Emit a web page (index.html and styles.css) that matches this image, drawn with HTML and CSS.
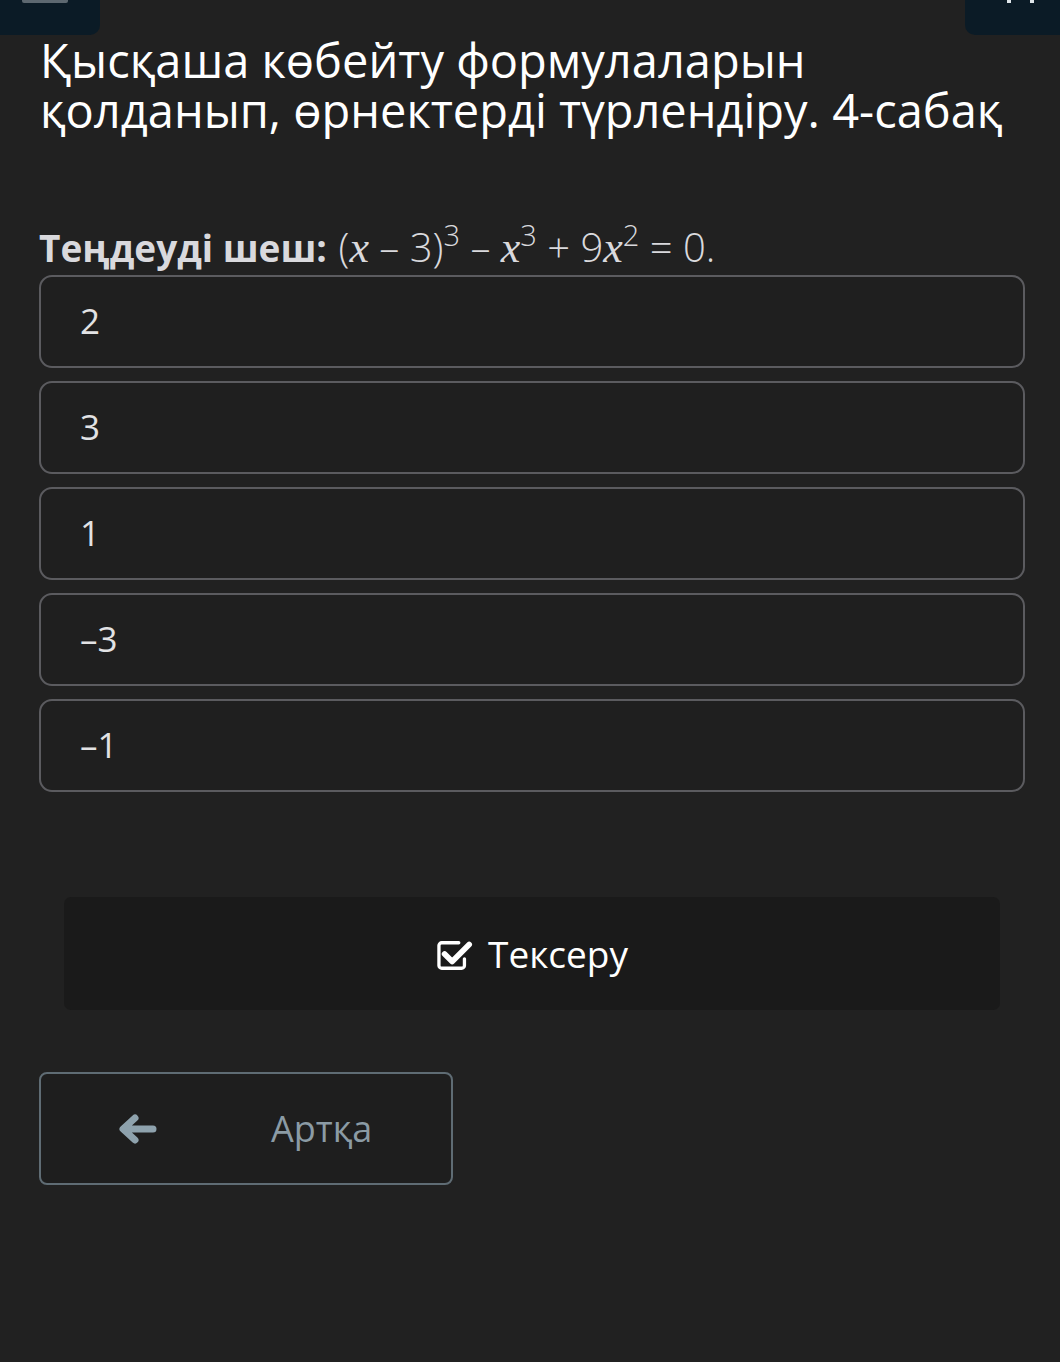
FILE: index.html
```html
<!DOCTYPE html>
<html lang="kk">
<head>
<meta charset="utf-8">
<link rel="stylesheet" href="styles.css">
</head>
<body>
<div class="page">
  <div class="topbar">
    <div class="tb-btn tb-left"><span class="burger"></span></div>
    <div class="tb-btn tb-right"><span class="dot"></span><span class="dot"></span></div>
  </div>
  <h1 class="title">Қысқаша көбейту формулаларын<br>қолданып, өрнектерді түрлендіру. 4-сабақ</h1>
  <p class="question"><b>Теңдеуді шеш:</b> <span class="math">(<i>x</i> – 3)<sup>3</sup> – <i>x</i><sup>3</sup> + 9<i>x</i><sup>2</sup> = 0.</span></p>
  <div class="options">
    <div class="option">2</div>
    <div class="option">3</div>
    <div class="option">1</div>
    <div class="option">–3</div>
    <div class="option">–1</div>
  </div>
  <div class="check-wrap">
    <button class="check">
      <svg class="check-icon" viewBox="0 0 40 36" width="38" height="34">
        <path d="M30 22 V29 a3 3 0 0 1 -3 3 H6 a3 3 0 0 1 -3 -3 V8 a3 3 0 0 1 3 -3 H24" fill="none" stroke="#fff" stroke-width="3.5" stroke-linecap="round"/>
        <path d="M9 17 L17 25 L35 7" fill="none" stroke="#fff" stroke-width="6" stroke-linecap="round" stroke-linejoin="round"/>
      </svg>
      <span>Тексеру</span>
    </button>
  </div>
  <button class="back">
    <svg class="back-icon" viewBox="0 0 40 32" width="40" height="32">
      <path d="M36 16 H8 M18 5 L6 16 L18 27" fill="none" stroke="#8ea2ad" stroke-width="7" stroke-linecap="round" stroke-linejoin="round"/>
    </svg>
    <span class="back-text">Артқа</span>
  </button>
</div>
</body>
</html>
```
FILE: styles.css
```css
* { box-sizing: border-box; }
html, body { margin: 0; padding: 0; background: #212121; }
body { font-family: "Open Sans", "Noto Sans", sans-serif; color: #fff; width: 1060px; height: 1362px; overflow: hidden; }
.page { padding: 0 35px 0 39px; position: relative; }
.topbar { display: flex; justify-content: space-between; margin: 0 -35px 0 -39px; height: 35px; }
.tb-btn { background: #0b1b26; height: 35px; border-radius: 0 0 10px 10px; position: relative; }
.tb-left { width: 100px; border-bottom-left-radius: 0; }
.tb-right { width: 95px; border-bottom-right-radius: 0; }
.burger { position: absolute; left: 22px; top: 0; width: 46px; height: 3px; background: #5d6870; border-radius: 0 0 2px 2px; }
.dot { position: absolute; top: 0; width: 4px; height: 3px; background: #dfe6ea; }
.tb-right .dot:first-child { left: 42px; }
.tb-right .dot:last-child { left: 65px; }
.title { font-weight: 400; font-size: 47px; line-height: 50px; margin: 0 0 0 1px; color: #fff; white-space: nowrap; }
.question { margin: 90px 0 0 0; font-size: 37px; line-height: 44px; color: #d9d9dd; }
.question b { font-weight: 700; }
.math { font-family: "Open Sans", sans-serif; font-size: 40px; font-weight: 300; margin-left: 2px; }
.math i { font-family: "Liberation Serif", serif; font-size: 44px; font-style: italic; }
.math sup { font-size: 29px; line-height: 0; vertical-align: 0; position: relative; top: -16px; }
.options { display: flex; flex-direction: column; gap: 13px; margin-top: 5px; }
.option { height: 93px; border: 2.5px solid #5b5b5f; border-radius: 13px; background: #1f1f1f; font-size: 35px; line-height: 88px; padding-left: 39px; color: #e2e2e4; font-weight: 400; }
.check-wrap { padding: 105px 25px 0 25px; }
.check { width: 936px; height: 113px; background: #1a1a1a; border: none; border-radius: 7px; display: flex; align-items: center; justify-content: center; gap: 14px; color: #fff; font-family: inherit; font-size: 37px; padding: 0; }
.check-icon { margin-top: 2px; }
.back { margin-top: 62px; width: 414px; height: 113px; background: #1e1e1e; border: 2.5px solid #5f6c74; border-radius: 8px; display: flex; align-items: center; padding: 0 0 0 76px; font-family: inherit; }
.back-icon { flex: none; }
.back-text { margin-left: 114px; font-size: 36px; color: #8b9ba5; }
```
